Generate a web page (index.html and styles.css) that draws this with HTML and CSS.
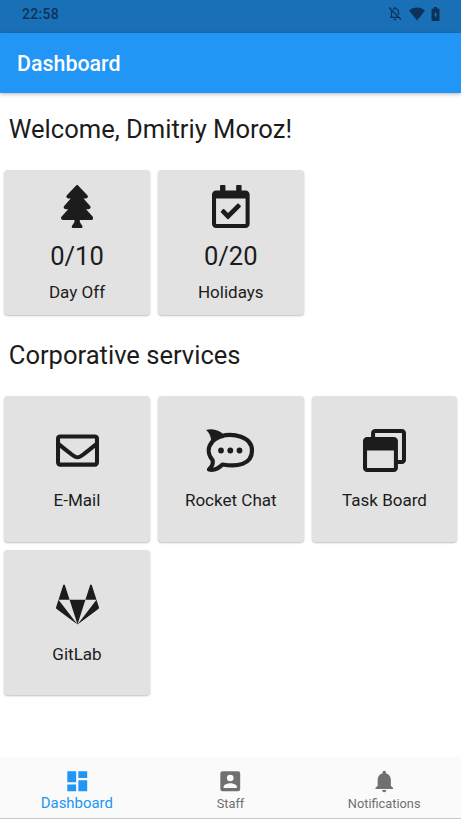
FILE: index.html
```html
<!DOCTYPE html>
<html lang="en">
<head>
    <meta charset="UTF-8">
    <meta name="viewport" content="width=device-width, initial-scale=1.0">
    <title>Dashboard</title>
    <link rel="stylesheet" href="styles.css">
</head>
<body>
    <div class="status-bar">
        <span class="time">22:58</span>
        <div class="status-icons">
            <svg width="14" height="15" viewBox="0 0 14 15" fill="none" stroke="currentColor" stroke-width="1.3">
                <path d="M1 1.5l12 12M3.5 5v6.2M2 11.4h8.5M5 3.2C8 1.5 10.5 3.5 10.5 6v3M7 .8v1.5M5.8 13.5h2.4"/>
            </svg>
            <svg width="16" height="14" viewBox="0 0 16 14" fill="currentColor">
                <path d="M0 3.5C4.5-.5 11.5-.5 16 3.5L8 13.5z"/>
            </svg>
            <svg width="9" height="14" viewBox="0 0 9 14" fill="currentColor" fill-rule="evenodd">
                <path d="M3 0h3v1.5h1.5q1 0 1 1V13q0 1-1 1h-6q-1 0-1-1V2.5q0-1 1-1H3zM5 4.5L2.8 8.3H4.2V11L6.3 7.2H5z"/>
            </svg>
        </div>
    </div>
    <header>Dashboard</header>

    <main>
        <h2>Welcome, Dmitriy Moroz!</h2>
        <section class="cards">
            <div class="card">
                <svg class="icon" viewBox="0 0 384 512"><path d="M378.31 378.49L298.42 288h30.63c9.01 0 16.98-5 20.78-13.06 3.8-8.04 2.55-17.26-3.28-24.05L268.42 160h28.89c9.1 0 17.3-5.35 20.86-13.61 3.52-8.13 1.86-17.59-4.24-24.08L203.66 4.83c-6.03-6.45-17.28-6.45-23.32 0L70.06 122.31c-6.1 6.49-7.75 15.95-4.24 24.08C69.38 154.65 77.59 160 86.69 160h28.89l-78.14 90.91c-5.81 6.78-7.06 15.99-3.27 24.04C37.97 283 45.93 288 54.95 288h30.63L5.69 378.49c-6 6.79-7.36 16.09-3.56 24.26 3.75 8.05 12 13.25 21.01 13.25H160v24.45l-30.29 48.4c-5.32 10.64 2.42 23.16 14.31 23.16h95.96c11.89 0 19.63-12.52 14.31-23.16L224 440.45V416h136.86c9.01 0 17.26-5.2 21.01-13.25 3.8-8.17 2.44-17.47-3.56-24.26z"/></svg>
                <span class="count">0/10</span>
                <span class="label">Day Off</span>
            </div>
            <div class="card">
                <svg class="icon" viewBox="0 0 448 512"><path d="M400 64h-48V12c0-6.627-5.373-12-12-12h-40c-6.627 0-12 5.373-12 12v52H160V12c0-6.627-5.373-12-12-12h-40c-6.627 0-12 5.373-12 12v52H48C21.49 64 0 85.49 0 112v352c0 26.51 21.49 48 48 48h352c26.51 0 48-21.49 48-48V112c0-26.51-21.49-48-48-48zm-6 400H54a6 6 0 0 1-6-6V160h352v298a6 6 0 0 1-6 6zm-52.849-200.65L198.842 404.519c-4.705 4.667-12.303 4.637-16.971-.068l-75.091-75.699c-4.667-4.705-4.637-12.303.068-16.971l22.719-22.536c4.705-4.667 12.303-4.637 16.97.069l44.104 44.461 111.072-110.181c4.705-4.667 12.303-4.637 16.971.068l22.536 22.718c4.667 4.705 4.636 12.303-.069 16.97z"/></svg>
                <span class="count">0/20</span>
                <span class="label">Holidays</span>
            </div>
        </section>

        <h2>Corporative services</h2>
        <section class="cards">
            <div class="card service">
                <svg class="icon" viewBox="0 0 512 512" fill="none" stroke="currentColor" stroke-width="48">
                    <rect x="24" y="88" width="464" height="336" rx="26"/>
                    <path d="M24 174c52 42 96 76 150 119 22 18 52 43 82 43s60-25 82-43c54-43 98-77 150-119"/>
                </svg>
                <span class="label">E-Mail</span>
            </div>
            <div class="card service">
                <svg class="icon wide" viewBox="0 0 48 43">
                    <path fill="none" stroke="currentColor" stroke-width="4.2" stroke-linejoin="round" d="M15 7C26 4 45.500 7 45.500 21.500S30 38 16 35.500C12 39.500 7 41.500 2.500 40.500C6 37 7 34 6 31C1 25 1 18 6 12.500"/>
                    <path d="M-.5 1C6-1 13 1 17.500 6L17 9C12 10 8 12.500 4.500 17C5.500 10 3.500 4 -.5 1z"/>
                    <circle cx="14.500" cy="21.500" r="2.900"/>
                    <circle cx="23.800" cy="21.500" r="2.900"/>
                    <circle cx="33" cy="21.500" r="2.900"/>
                </svg>
                <span class="label">Rocket Chat</span>
            </div>
            <div class="card service">
                <svg class="icon" viewBox="0 0 512 512"><path d="M464 0H144c-26.5 0-48 21.5-48 48v48H48c-26.5 0-48 21.5-48 48v320c0 26.5 21.5 48 48 48h320c26.5 0 48-21.5 48-48v-48h48c26.5 0 48-21.5 48-48V48c0-26.5-21.5-48-48-48zm-96 464H48V256h320v208zm96-96h-48V144c0-26.5-21.5-48-48-48H144V48h320v320z"/></svg>
                <span class="label">Task Board</span>
            </div>
            <div class="card service">
                <svg class="icon" viewBox="0 0 512 512"><path d="M29.782 199.732L256 493.714 8.074 309.699c-6.856-5.142-9.712-13.996-7.141-21.993l28.849-87.974zm75.405-174.806c-3.142-8.854-15.709-8.854-18.851 0L29.782 199.732h131.961L105.187 24.926zm56.556 174.806L256 493.714l94.257-293.982H161.743zm349.324 87.974l-28.849-87.974L256 493.714l247.926-184.015c6.855-5.142 9.711-13.996 7.141-21.993zm-85.404-262.78c-3.142-8.854-15.708-8.854-18.851 0l-56.555 174.806h131.961L425.663 24.926z"/></svg>
                <span class="label">GitLab</span>
            </div>
        </section>
    </main>

    <nav>
        <a class="active">
            <svg viewBox="0 0 24 24"><path d="M3 13h8V3H3v10zm0 8h8v-6H3v6zm10 0h8V11h-8v10zm0-18v6h8V3h-8z"/></svg>
            Dashboard
        </a>
        <a>
            <svg viewBox="0 0 24 24"><path d="M3 5v14a2 2 0 0 0 2 2h14a2 2 0 0 0 2-2V5a2 2 0 0 0-2-2H5a2 2 0 0 0-2 2zm12 4a3 3 0 1 1-6 0 3 3 0 0 1 6 0zm-9 8c0-2 4-3.1 6-3.1s6 1.1 6 3.1v1H6v-1z"/></svg>
            Staff
        </a>
        <a>
            <svg viewBox="0 0 24 24"><path d="M12 22c1.1 0 2-.9 2-2h-4c0 1.1.9 2 2 2zm6-6v-5c0-3.07-1.64-5.64-4.5-6.32V4a1.5 1.5 0 0 0-3 0v.68C7.63 5.36 6 7.92 6 11v5l-2 2v1h16v-1l-2-2z"/></svg>
            Notifications
        </a>
    </nav>
</body>
</html>
```

FILE: styles.css
```css
* {
    box-sizing: border-box;
}
body {
    margin: 0;
    height: 819px;
    display: flex;
    flex-direction: column;
    font-family: Roboto, sans-serif;
    background: #fff;
    color: #1c1c1c;
    overflow: hidden;
}
.status-bar {
    height: 32.5px;
    flex: none;
    display: flex;
    align-items: center;
    justify-content: space-between;
    padding: 0 21px 5px 22px;
    background: #1a70b7;
    color: #0c3357;
}
.time {
    font-size: 14px;
    font-weight: 500;
    letter-spacing: 0.3px;
}
.status-icons {
    display: flex;
    align-items: center;
    gap: 6.5px;
}
header {
    height: 60px;
    flex: none;
    padding-left: 17px;
    line-height: 62px;
    background: #2196f6;
    color: white;
    font-size: 21.4px;
    font-weight: 500;
    box-shadow: 0 1px 4px rgba(0, 0, 0, 0.3);
}
main {
    flex: 1;
    padding: 0 4.25px;
}
h2 {
    margin: 0;
    padding: 0 4.5px;
    height: 77px;
    line-height: 73px;
    font-size: 25.55px;
    font-weight: 400;
}
.cards {
    display: grid;
    grid-template-columns: repeat(3, 145.5px);
    grid-auto-rows: 145.5px;
    gap: 8.25px;
}
.cards + h2 {
    height: 81px;
    line-height: 80px;
}
.card {
    display: flex;
    flex-direction: column;
    align-items: center;
    padding-top: 15px;
    background: #e2e2e2;
    border-radius: 4px;
    box-shadow: 0 1px 2px rgba(0, 0, 0, 0.25);
}
.service {
    padding-top: 33px;
}
.icon {
    height: 43px;
    fill: currentColor;
}
.icon[fill="none"] {
    fill: none;
}
.wide {
    width: 49px;
    overflow: visible;
}
.count {
    margin-top: 12px;
    font-size: 25.55px;
    line-height: 32px;
}
.label {
    margin-top: 9px;
    font-size: 17.05px;
    line-height: 22px;
}
.service .label {
    margin-top: 17px;
}
nav {
    height: 62px;
    flex: none;
    display: flex;
    background: #fafafa;
    border-bottom: 1px solid #c8c8c8;
}
nav a {
    flex: 1;
    display: flex;
    flex-direction: column;
    align-items: center;
    padding-top: 10.5px;
    color: #707070;
    font-size: 12.8px;
    line-height: 20px;
}
nav svg {
    width: 26.5px;
    height: 26.5px;
    fill: currentColor;
}
nav .active {
    color: #2196f3;
    font-size: 14.9px;
    line-height: 18px;
}
```
